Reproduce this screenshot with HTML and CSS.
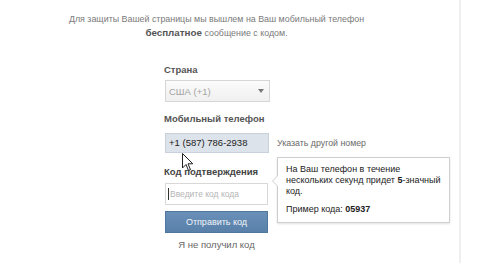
FILE: index.html
```html
<!DOCTYPE html>
<html lang="ru">
<head>
    <meta charset="UTF-8">
    <title>Подтверждение номера</title>
    <link rel="stylesheet" href="styles.css">
</head>
<body>
    <div class="page">
        <div class="main">
            <p class="intro">
                Для защиты Вашей страницы мы вышлем на Ваш мобильный телефон<br>
                <b>бесплатное</b> сообщение с кодом.
            </p>

            <div class="form">
                <div class="label label-country">Страна</div>
                <div class="select">
                    <span>США (+1)</span>
                    <span class="select-arrow"></span>
                </div>

                <div class="label label-phone">Мобильный телефон</div>
                <div class="phone-row">
                    <div class="phone-input">+1 (587) 786-2938</div>
                    <a class="link" href="#">Указать другой номер</a>
                </div>

                <div class="label label-code">Код подтверждения</div>
                <div class="code-input"><span class="caret"></span>Введите код кода</div>
                <button class="send-btn">Отправить код</button>
                <div class="no-code">Я не получил код</div>
            </div>

            <!-- hint next to the code field -->
            <div class="hint">
                <p>На Ваш телефон в течение<br>нескольких секунд придет <b>5</b>-значный<br>код.</p>
                <p class="hint-example">Пример кода: <b>05937</b></p>
            </div>

            <svg class="cursor" width="12" height="19" viewBox="0 0 12 19">
                <path d="M0.5 0.5 L0.5 15 L4 11.5 L6.5 17.5 L8.5 16.7 L6 10.8 L10.8 10.8 Z" fill="#fff" stroke="#222" stroke-width="1"/>
            </svg>
        </div>
    </div>
</body>
</html>
```

FILE: styles.css
```css
body {
    margin: 0;
    background: #fff;
    font-family: "Liberation Sans", Arial, sans-serif;
    font-size: 11px;
    color: #333;
}

.page {
    display: flex;
}

.main {
    position: relative;
    width: 459px;
    height: 263px;
    border-right: 2px solid #efefef;
}

.intro {
    width: 433px;
    margin: 0;
    padding-top: 12px;
    text-align: center;
    font-size: 8.9px;
    line-height: 14px;
    color: #7a7a7a;
}

.intro b {
    font-size: 9.8px;
    color: #555;
}

.form {
    margin-left: 164px;
    display: flex;
    flex-direction: column;
    align-items: flex-start;
}

.label {
    line-height: 14px;
    font-size: 9.5px;
    font-weight: bold;
    color: #555;
}

.label-country {
    margin-top: 23px;
}

.label-phone {
    margin-top: 10px;
}

.label-code {
    margin-top: 12px;
    color: #444;
}

.select {
    margin-top: 3px;
    margin-left: 1px;
    width: 105px;
    height: 22px;
    box-sizing: border-box;
    border: 1px solid #d6d6d6;
    background: linear-gradient(#fbfbfb, #f0f0f0);
    display: flex;
    align-items: center;
    justify-content: space-between;
    padding: 0 5px 0 3px;
    font-size: 9.5px;
    color: #a3a3a3;
}

.select-arrow {
    width: 0;
    height: 0;
    border-left: 3px solid transparent;
    border-right: 3px solid transparent;
    border-top: 4px solid #777;
}

.phone-row {
    margin-top: 7px;
    margin-left: 1px;
    display: flex;
    align-items: center;
    gap: 8px;
}

.phone-input {
    width: 104px;
    height: 20px;
    box-sizing: border-box;
    border: 1px solid #c9d1dc;
    background: #dde3ea;
    padding: 0 3px;
    font-size: 9.5px;
    line-height: 18px;
    color: #222;
}

.link {
    font-size: 8.8px;
    color: #6a6a6a;
    text-decoration: none;
}

.code-input {
    margin-top: 4px;
    margin-left: 1px;
    width: 103px;
    height: 22px;
    box-sizing: border-box;
    border: 1px solid #d8d8d8;
    background: #fff;
    padding: 0 2px;
    font-size: 8.5px;
    line-height: 20px;
    color: #b5b5b5;
    display: flex;
    align-items: center;
}

.caret {
    width: 1px;
    height: 12px;
    background: #333;
    margin-right: 1px;
}

.send-btn {
    margin-top: 6px;
    margin-left: 1px;
    width: 103px;
    height: 22px;
    border: 1px solid #52779f;
    background: linear-gradient(#6a90b8, #5880a9);
    color: #f2f5f9;
    font-family: inherit;
    font-size: 9px;
    padding: 0;
}

.no-code {
    margin-top: 5px;
    margin-left: 1px;
    width: 103px;
    text-align: center;
    font-size: 9.5px;
    line-height: 14px;
    color: #666;
}

.hint {
    position: absolute;
    left: 277px;
    top: 157px;
    width: 173px;
    height: 66px;
    box-sizing: border-box;
    border: 1px solid #cfcfcf;
    background: #fff;
    box-shadow: 0 1px 2px rgba(0, 0, 0, 0.12);
    padding: 6px 4px 6px 8px;
    font-size: 9px;
    line-height: 11px;
    color: #222;
    white-space: nowrap;
}

.hint::before {
    content: "";
    position: absolute;
    left: -6px;
    top: 17px;
    border-top: 6px solid transparent;
    border-bottom: 6px solid transparent;
    border-right: 6px solid #cfcfcf;
}

.hint::after {
    content: "";
    position: absolute;
    left: -5px;
    top: 17px;
    border-top: 6px solid transparent;
    border-bottom: 6px solid transparent;
    border-right: 6px solid #fff;
}

.hint p {
    margin: 0;
}

.hint-example {
    margin-top: 7px !important;
}

.cursor {
    position: absolute;
    left: 182px;
    top: 153px;
}
```
